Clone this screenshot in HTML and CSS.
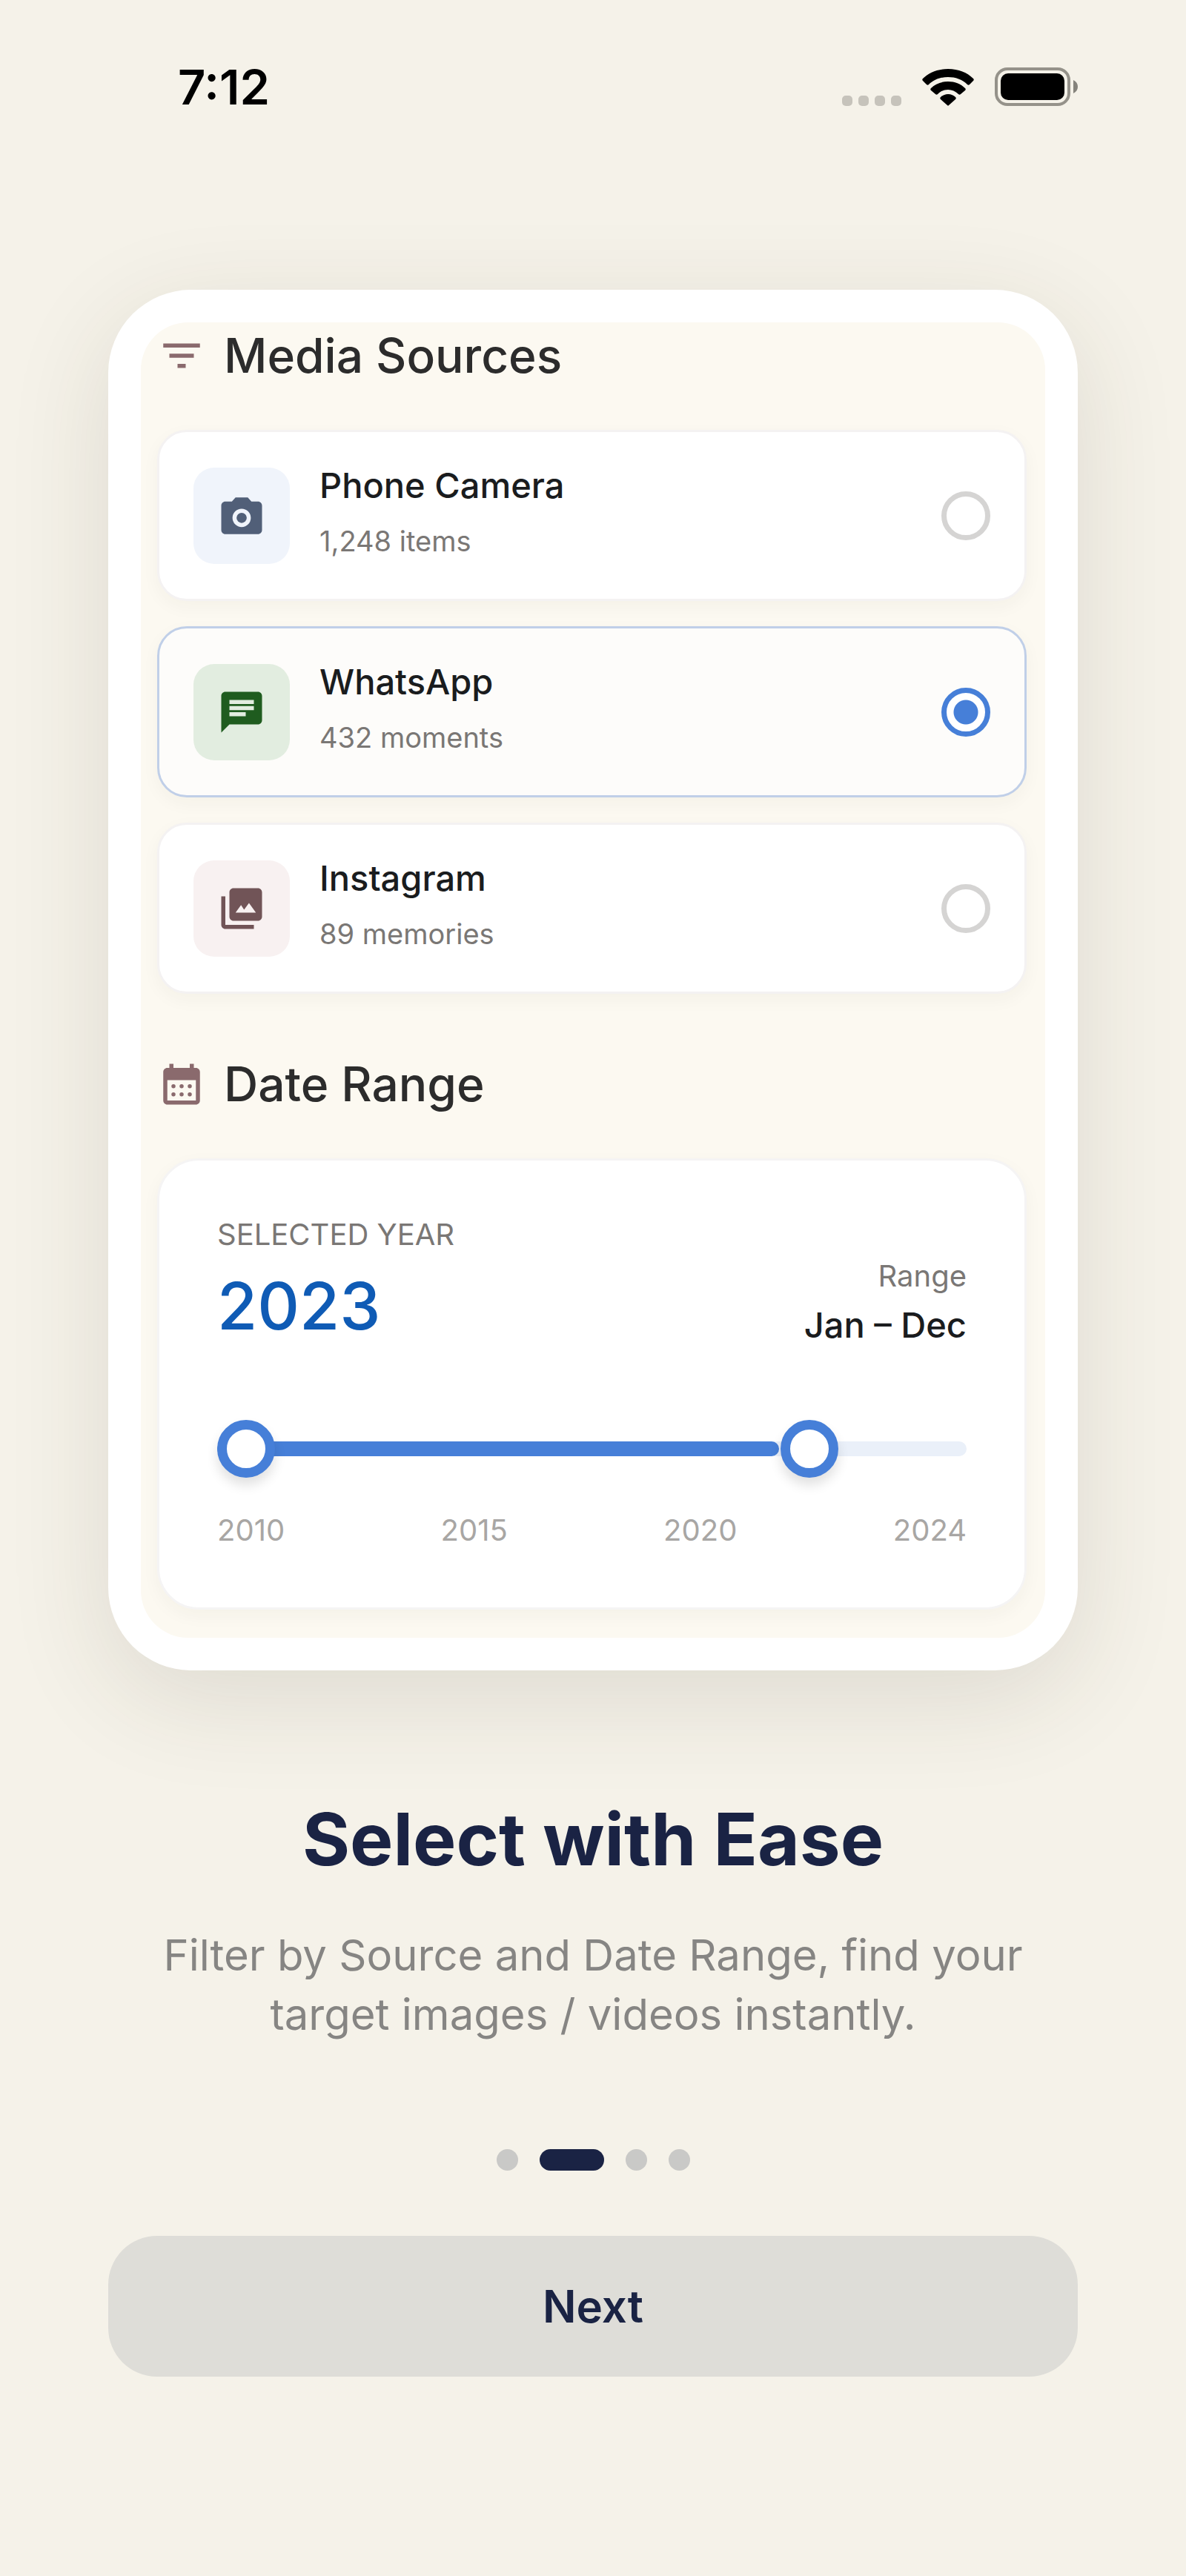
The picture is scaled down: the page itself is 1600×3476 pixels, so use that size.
FILE: index.html
```
<!DOCTYPE html>
<html lang="en">
<head>
    <meta charset="UTF-8">
    <meta name="viewport" content="width=device-width, initial-scale=1.0">
    <title>Select with Ease</title>
    <link rel="stylesheet" href="styles.css">
</head>
<body>
    <header class="status-bar">
        <span class="time">7:12</span>
        <div class="status-icons">
            <div class="signal"><span></span><span></span><span></span><span></span></div>
            <svg class="wifi" viewBox="0 0 70 50">
                <path d="M35 0C49 0 61 5 69 13c1 1 1 2 0 3l-5 5c-1 1-2 1-3 0C54 14 45 11 35 11S16 14 9 21c-1 1-2 1-3 0l-5-5c-1-1-1-2 0-3C9 5 21 0 35 0z"/>
                <path d="M35 17c9 0 17 3 23 9 1 1 1 2 0 3l-6 5c-1 1-2 1-3 0-4-4-9-6-14-6s-10 2-14 6c-1 1-2 1-3 0l-6-5c-1-1-1-2 0-3 6-6 14-9 23-9z"/>
                <path d="M35 34c4 0 8 2 10 4 1 1 1 2 0 3l-9 8c-1 1-1 1-2 0l-9-8c-1-1-1-2 0-3 2-2 6-4 10-4z"/>
            </svg>
            <svg class="battery" viewBox="0 0 112 52">
                <rect x="2" y="2" width="98" height="48" rx="15" fill="none" stroke="#95928a" stroke-width="4"/>
                <rect x="8" y="8" width="86" height="36" rx="10"/>
                <path d="M106 17c4 2 6 5 6 9s-2 7-6 9z" fill="#85837c"/>
            </svg>
        </div>
    </header>

    <main class="container">
        <div class="preview">
            <div class="preview-screen">
                <h2 class="section-title">
                    <svg viewBox="0 0 24 24"><path d="M10 18h4v-2h-4v2zM3 6v2h18V6H3zm3 7h12v-2H6v2z"/></svg>
                    Media Sources
                </h2>
                <div class="sources">
                    <label class="source">
                        <span class="source-icon camera">
                            <svg viewBox="0 0 24 24">
                                <path fill-rule="evenodd" d="M4 21c-1.1 0-2-.9-2-2V7c0-1.1.9-2 2-2h3.2L9 3h6l1.8 2H20c1.1 0 2 .9 2 2v12c0 1.1-.9 2-2 2zm8-3.500a4.500 4.500 0 1 0 0-9 4.500 4.500 0 0 0 0 9z"/>
                                <circle cx="12" cy="13" r="2.500"/>
                            </svg>
                        </span>
                        <span class="source-text">
                            <span class="source-name">Phone Camera</span>
                            <span class="source-count">1,248 items</span>
                        </span>
                        <input type="radio" name="source">
                    </label>
                    <label class="source selected">
                        <span class="source-icon whatsapp">
                            <svg viewBox="0 0 24 24"><path fill-rule="evenodd" d="M20 2H4c-1.1 0-2 .9-2 2v18l4-4h14c1.1 0 2-.9 2-2V4c0-1.1-.9-2-2-2zM6 6h12v2H6zM6 9h12v2H6zM6 12h8v2H6z"/></svg>
                        </span>
                        <span class="source-text">
                            <span class="source-name">WhatsApp</span>
                            <span class="source-count">432 moments</span>
                        </span>
                        <input type="radio" name="source" checked>
                    </label>
                    <label class="source">
                        <span class="source-icon instagram">
                            <svg viewBox="0 0 24 24">
                                <path fill-rule="evenodd" d="M8 2h12c1.1 0 2 .9 2 2v12c0 1.1-.9 2-2 2H8c-1.1 0-2-.9-2-2V4c0-1.1.9-2 2-2zm1 12h10l-3.400-4.700-2.400 3.200-1.500-2.200z"/>
                                <path d="M2 6h2v14h14v2H4c-1.100 0-2-.9-2-2z"/>
                            </svg>
                        </span>
                        <span class="source-text">
                            <span class="source-name">Instagram</span>
                            <span class="source-count">89 memories</span>
                        </span>
                        <input type="radio" name="source">
                    </label>
                </div>

                <h2 class="section-title">
                    <svg viewBox="0 0 24 24">
                        <path fill-rule="evenodd" d="M6 2h2v2h8V2h2v2h1c1.100 0 2 .9 2 2v14c0 1.100-.9 2-2 2H5c-1.100 0-2-.9-2-2V6c0-1.100.9-2 2-2h1zM5 10v10h14V10z"/>
                        <circle cx="8" cy="13" r="1"/><circle cx="12" cy="13" r="1"/><circle cx="16" cy="13" r="1"/>
                        <circle cx="8" cy="17" r="1"/><circle cx="12" cy="17" r="1"/><circle cx="16" cy="17" r="1"/>
                    </svg>
                    Date Range
                </h2>
                <div class="date-card">
                    <div class="date-info">
                        <div>
                            <div class="label">SELECTED YEAR</div>
                            <div class="year">2023</div>
                        </div>
                        <div class="range-info">
                            <div class="label">Range</div>
                            <div class="months">Jan – Dec</div>
                        </div>
                    </div>
                    <div class="slider">
                        <div class="track"><div class="fill" style="width: 75%"></div></div>
                        <input type="range" min="2010" max="2024" step="any" value="2010" aria-label="From year">
                        <input type="range" min="2010" max="2024" step="any" value="2021.4" aria-label="To year">
                    </div>
                    <div class="ticks">
                        <span>2010</span>
                        <span>2015</span>
                        <span>2020</span>
                        <span>2024</span>
                    </div>
                </div>
            </div>
        </div>

        <h1>Select with Ease</h1>
        <p class="subtitle">Filter by Source and Date Range, find your target images / videos instantly.</p>

        <div class="dots">
            <button class="dot" aria-label="Page 1"></button>
            <button class="dot active" aria-label="Page 2"></button>
            <button class="dot" aria-label="Page 3"></button>
            <button class="dot" aria-label="Page 4"></button>
        </div>

        <button class="next-button">Next</button>
    </main>
</body>
</html>
```
FILE: styles.css
```
* {
    margin: 0;
    padding: 0;
    box-sizing: border-box;
    font-family: Inter, 'Liberation Sans', sans-serif;
}

body {
    background: #f5f2e9;
    color: #1a1c1e;
    min-height: 100vh;
}

.status-bar {
    display: flex;
    justify-content: space-between;
    align-items: center;
    height: 234px;
    padding: 0 146px 0 240px;
}

.time {
    font-size: 65px;
    font-weight: 600;
    color: #000;
}

.status-icons {
    display: flex;
    align-items: flex-end;
    gap: 28px;
}

.signal {
    display: flex;
    gap: 8px;
}

.signal span {
    width: 14px;
    height: 14px;
    border-radius: 5px;
    background: #c6c3bb;
}

.wifi {
    width: 70px;
    height: 50px;
}

.battery {
    width: 112px;
    height: 52px;
}

.container {
    padding: 157px 146px 200px;
}

.preview {
    padding: 44px;
    background: #fff;
    border-radius: 112px;
    box-shadow: 0 36px 140px rgba(60, 50, 30, 0.12);
}

.preview-screen {
    padding: 5px 25px 38px 22px;
    background: #fcf9f1;
    border-radius: 64px;
}

.section-title {
    display: flex;
    align-items: center;
    gap: 24px;
    margin-bottom: 60px;
    font-size: 64px;
    line-height: 80px;
    font-weight: 500;
    color: #2c2c2c;
}

.section-title svg {
    width: 66px;
    height: 66px;
    fill: #8a6a6d;
}

.sources {
    display: flex;
    flex-direction: column;
    gap: 34px;
    margin-bottom: 82px;
}

.source {
    display: flex;
    align-items: center;
    gap: 40px;
    padding: 40px 46px;
    background: #fff;
    border: 3px solid #f4f2f2;
    border-radius: 40px;
    box-shadow: 0 8px 24px rgba(60, 50, 30, 0.04);
    cursor: pointer;
}

.source.selected {
    background: #fdfcfa;
    border-color: #c0cfe8;
}

.source-icon {
    display: flex;
    align-items: center;
    justify-content: center;
    width: 130px;
    height: 130px;
    border-radius: 28px;
}

.source-icon svg {
    width: 66px;
    height: 66px;
    fill: currentColor;
}

.camera {
    background: #f0f4fb;
    color: #515f78;
}

.whatsapp {
    background: #e2ede0;
    color: #1f5c1f;
}

.instagram {
    background: #f8f1f1;
    color: #715457;
}

.source-text {
    display: flex;
    flex-direction: column;
    flex: 1;
    gap: 19px;
    padding-bottom: 14px;
}

.source-name {
    font-size: 47px;
    line-height: 64px;
    font-weight: 500;
}

.source-count {
    font-size: 38px;
    line-height: 48px;
    color: #7a7775;
}

.source input {
    appearance: none;
    width: 66px;
    height: 66px;
    border: 7px solid #d5d4d3;
    border-radius: 50%;
    background: #fff;
}

.source input:checked {
    border-color: #467fd8;
    background: radial-gradient(circle, #467fd8 16px, #fff 17px);
}

.date-card {
    padding: 76px 78px 80px;
    background: #fff;
    border: 3px solid #f5f4f4;
    border-radius: 56px;
    box-shadow: 0 8px 24px rgba(60, 50, 30, 0.04);
}

.date-info {
    display: flex;
    justify-content: space-between;
    align-items: flex-end;
}

.label {
    font-size: 40px;
    line-height: 48px;
    color: #7a7775;
}

.year {
    margin-top: 18px;
    font-size: 88px;
    line-height: 108px;
    font-weight: 500;
    color: #0f5bb5;
}

.range-info {
    text-align: right;
}

.months {
    margin-top: 14px;
    font-size: 47px;
    line-height: 56px;
    font-weight: 500;
}

/* track and both range inputs share one grid cell */
.slider {
    display: grid;
    align-items: center;
    margin-top: 99px;
}

.slider > * {
    grid-area: 1 / 1;
}

.track {
    height: 20px;
    border-radius: 10px;
    background: #eaf0f9;
}

.fill {
    height: 100%;
    border-radius: 10px;
    background: #467fd8;
}

.slider input {
    appearance: none;
    width: 100%;
    height: 80px;
    background: none;
    pointer-events: none;
}

.slider input::-webkit-slider-thumb {
    appearance: none;
    width: 78px;
    height: 78px;
    border: 13px solid #467fd8;
    border-radius: 50%;
    background: #fff;
    box-shadow: 0 10px 16px rgba(0, 0, 0, 0.12);
    pointer-events: auto;
    cursor: pointer;
}

.ticks {
    display: flex;
    justify-content: space-between;
    margin-top: 46px;
    font-size: 40px;
    line-height: 48px;
    color: #a8a6a4;
}

h1 {
    margin-top: 168px;
    font-size: 98px;
    line-height: 120px;
    font-weight: 700;
    text-align: center;
    color: #1a2344;
}

.subtitle {
    margin: 56px 40px 0;
    font-size: 58px;
    line-height: 80px;
    text-align: center;
    color: #868583;
}

.dots {
    display: flex;
    justify-content: center;
    gap: 29px;
    margin: 142px 0 88px;
}

.dot {
    width: 29px;
    height: 29px;
    border: none;
    border-radius: 15px;
    background: #c9c9c7;
    cursor: pointer;
}

.dot.active {
    width: 87px;
    background: #1a2344;
}

.next-button {
    width: 100%;
    height: 190px;
    border: none;
    border-radius: 66px;
    background: #deddd8;
    color: #1a2344;
    font-size: 60px;
    font-weight: 600;
    cursor: pointer;
}
```
